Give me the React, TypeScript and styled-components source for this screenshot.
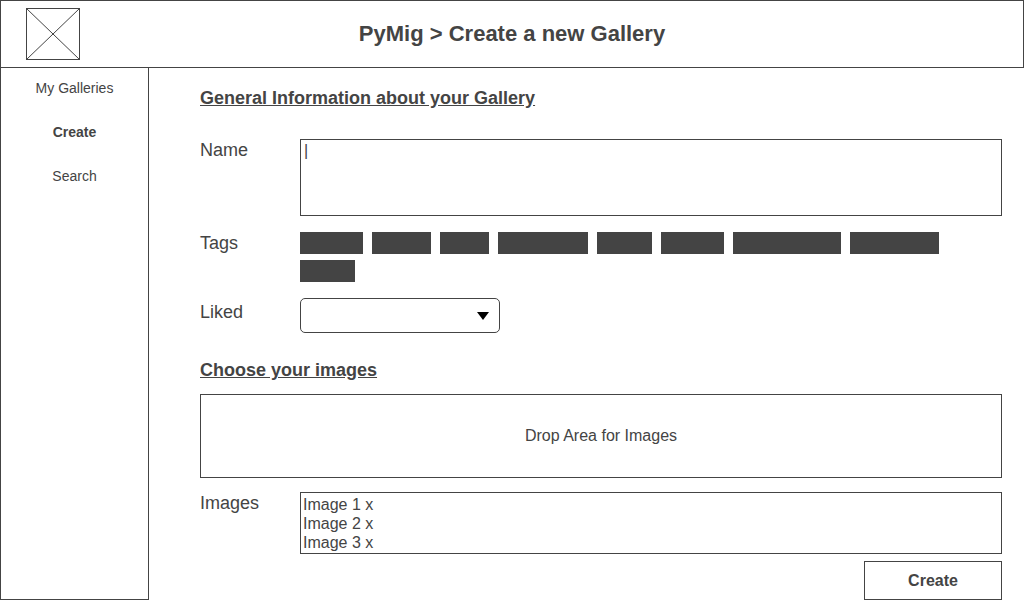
import React from 'react';
import styled, { createGlobalStyle } from 'styled-components';

const ink = '#444';

const GlobalStyle = createGlobalStyle`
  *, *::before, *::after { box-sizing: border-box; }
  body {
    margin: 0;
    background: #fff;
    color: ${ink};
    font-family: 'Liberation Sans', Arial, sans-serif;
    font-size: 16px;
  }
`;

const Page = styled.div`
  display: flex;
  flex-direction: column;
  min-height: 100vh;
`;

const Header = styled.header`
  display: grid;
  grid-template-columns: 1fr auto 1fr;
  align-items: center;
  padding: 7px 25px;
  border: 1px solid ${ink};
`;

const Logo = styled.svg`
  display: block;
  width: 54px;
  height: 52px;
`;

const Title = styled.h1`
  margin: 0;
  font-size: 22px;
  line-height: 26px;
`;

const Body = styled.div`
  display: flex;
  flex: 1;
`;

const Sidebar = styled.nav`
  flex: 0 0 149px;
  border: 1px solid ${ink};
  border-top: 0;
  padding-top: 8px;
`;

const NavList = styled.ul`
  display: flex;
  flex-direction: column;
  gap: 20px;
  margin: 0;
  padding: 0;
  list-style: none;
  text-align: center;
`;

const NavLink = styled.a<{ $active?: boolean }>`
  display: block;
  color: inherit;
  font-size: 14px;
  line-height: 24px;
  font-weight: ${({ $active }) => ($active ? 'bold' : 'normal')};
  text-decoration: none;
`;

const Form = styled.form`
  flex: 1;
  min-width: 0;
  padding: 20px 22px 0 51px;
`;

const Section = styled.section`
  display: flex;
  flex-direction: column;
  gap: 16px;
  margin-bottom: 27px;
`;

const ImagesSection = styled(Section)`
  gap: 14px;
  margin-bottom: 7px;
`;

const Heading = styled.h2`
  margin: 0;
  font-size: 18px;
  line-height: 20px;
  text-decoration: underline;
`;

const InfoHeading = styled(Heading)`
  margin-bottom: 15px;
`;

const Row = styled.div`
  display: grid;
  grid-template-columns: 100px minmax(0, 1fr);
  align-items: start;
`;

const Label = styled.label<{ $tall?: boolean }>`
  font-size: 18px;
  line-height: ${({ $tall }) => ($tall ? 28 : 22)}px;
`;

const NameInput = styled.textarea`
  display: block;
  width: 100%;
  height: 77px;
  padding: 2px 3px;
  border: 1px solid ${ink};
  border-radius: 0;
  outline: 0;
  resize: none;
  overflow: hidden;
  background: transparent;
  color: inherit;
  font: 16px/18px 'Liberation Sans', Arial, sans-serif;
`;

const Tags = styled.ul`
  display: flex;
  flex-wrap: wrap;
  gap: 6px 9px;
  margin: 0;
  padding: 0;
  list-style: none;
`;

const Tag = styled.li<{ $width: number }>`
  width: ${({ $width }) => $width}px;
  height: 22px;
  background: ${ink};
`;

const SelectBox = styled.div`
  position: relative;
  width: 200px;
`;

const Select = styled.select`
  display: block;
  width: 100%;
  height: 35px;
  padding: 0 30px 0 8px;
  border: 1px solid ${ink};
  border-radius: 5px;
  appearance: none;
  background: #fff;
  color: inherit;
  font: inherit;
`;

const Arrow = styled.svg`
  position: absolute;
  top: 14px;
  right: 11px;
  width: 12px;
  height: 8px;
  pointer-events: none;
`;

const DropArea = styled.div`
  display: flex;
  align-items: center;
  justify-content: center;
  height: 84px;
  border: 1px solid ${ink};
`;

const ImageList = styled.ul`
  margin: 0;
  padding: 2px 2px 1px;
  border: 1px solid ${ink};
  list-style: none;
  line-height: 19px;
`;

const Actions = styled.div`
  display: flex;
  justify-content: flex-end;
`;

const SubmitButton = styled.button`
  width: 138px;
  height: 39px;
  padding: 0;
  border: 1px solid ${ink};
  background: #fff;
  color: inherit;
  font: bold 16px/20px 'Liberation Sans', Arial, sans-serif;
`;

const tagWidths = [63, 59, 49, 90, 55, 63, 108, 89, 55];
const images = ['Image 1', 'Image 2', 'Image 3'];

export default function App() {
  return (
    <Page>
      <GlobalStyle />
      <Header>
        <Logo viewBox="0 0 54 52" fill="none" stroke={ink} role="img" aria-label="Logo">
          <rect x="0.5" y="0.5" width="53" height="51" />
          <path d="M0.5 0.5 53.5 51.5M53.5 0.5 0.5 51.5" />
        </Logo>
        <Title>PyMig &gt; Create a new Gallery</Title>
      </Header>
      <Body>
        <Sidebar>
          <NavList>
            <li><NavLink href="#galleries">My Galleries</NavLink></li>
            <li><NavLink href="#create" $active aria-current="page">Create</NavLink></li>
            <li><NavLink href="#search">Search</NavLink></li>
          </NavList>
        </Sidebar>
        <Form onSubmit={(event) => event.preventDefault()}>
          <Section>
            <InfoHeading>General Information about your Gallery</InfoHeading>
            <Row>
              <Label htmlFor="name">Name</Label>
              <NameInput id="name" defaultValue="|" />
            </Row>
            <Row>
              <Label as="span" id="tags-label">Tags</Label>
              <Tags aria-labelledby="tags-label">
                {tagWidths.map((width, index) => (
                  <Tag key={index} $width={width} />
                ))}
              </Tags>
            </Row>
            <Row>
              <Label htmlFor="liked" $tall>Liked</Label>
              <SelectBox>
                <Select id="liked" defaultValue="">
                  <option value="" />
                </Select>
                <Arrow viewBox="0 0 12 8" aria-hidden="true">
                  <path d="M0 0h12L6 8z" fill="#000" />
                </Arrow>
              </SelectBox>
            </Row>
          </Section>
          <ImagesSection>
            <Heading>Choose your images</Heading>
            <DropArea>Drop Area for Images</DropArea>
            <Row>
              <Label as="span" id="images-label">Images</Label>
              <ImageList aria-labelledby="images-label">
                {images.map((image) => (
                  <li key={image}>{image} x</li>
                ))}
              </ImageList>
            </Row>
          </ImagesSection>
          <Actions>
            <SubmitButton type="submit">Create</SubmitButton>
          </Actions>
        </Form>
      </Body>
    </Page>
  );
}
